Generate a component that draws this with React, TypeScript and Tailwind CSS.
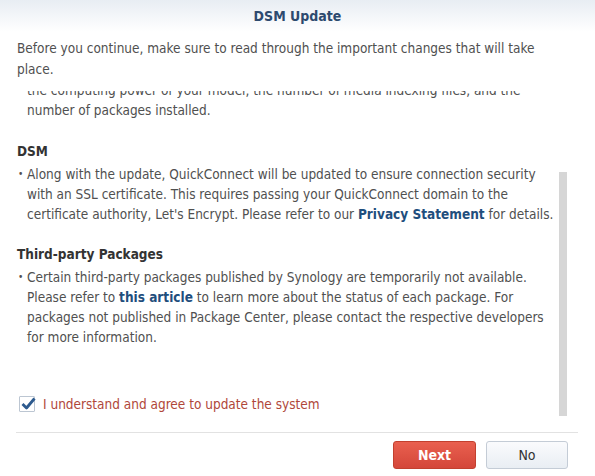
import React from "react"

const FONT = { fontFamily: '"DejaVu Sans Condensed", "DejaVu Sans", Verdana, sans-serif' }

function Bullet({ children }: { children: React.ReactNode }) {
  return (
    <div className="flex">
      <span className="w-[10px] shrink-0 pl-[1px] text-[10px]">•</span>
      <p className="flex-1">{children}</p>
    </div>
  )
}

export default function App() {
  return (
    <div style={FONT} className="w-[595px] h-[476px] bg-white flex flex-col text-[13.5px] text-[#505050] overflow-hidden">
      <header className="h-[32px] shrink-0 flex items-center justify-center bg-gradient-to-b from-[#e8edf3] to-white">
        <h1 className="text-[14px] font-bold text-[#2d4a6e]">DSM Update</h1>
      </header>

      <div className="pl-[17px] pr-[40px] pt-[6px] leading-[21px]">
        Before you continue, make sure to read through the important changes that will take place.
      </div>

      {/* scrolled content, top line cut by the viewport */}
      <div className="relative mt-[11px] h-[331px] shrink-0 overflow-hidden pl-[17px] pr-[40px] leading-[20px]">
        <div className="-mt-[11px]">
          <div className="pl-[10px]">
            the computing power of your model, the number of media indexing files, and the number of packages installed.
          </div>

          <h2 className="mt-[21px] font-bold text-[#333]">DSM</h2>
          <div className="mt-[3px]">
            <Bullet>
              Along with the update, QuickConnect will be updated to ensure connection security with an SSL
              certificate. This requires passing your QuickConnect domain to the certificate authority, Let's
              Encrypt. Please refer to our <span className="font-bold text-[#1f4e7d]">Privacy Statement</span> for
              details.
            </Bullet>
          </div>

          <h2 className="mt-[20px] font-bold text-[#333]">Third-party Packages</h2>
          <div className="mt-[3px]">
            <Bullet>
              Certain third-party packages published by Synology are temporarily not available. Please refer to{" "}
              <span className="font-bold text-[#1f4e7d]">this article</span> to learn more about the status of each
              package. For packages not published in Package Center, please contact the respective developers for
              more information.
            </Bullet>
          </div>

          <label className="mt-[47px] flex items-center gap-[8px] pl-[2px]">
            <span className="relative w-[16px] h-[16px] shrink-0 border border-[#bcc6d2] bg-white rounded-[1px]">
              <svg viewBox="0 0 16 16" className="absolute left-[0px] -top-[2px] w-[16px] h-[16px]">
                <path d="M2.5 9 L6.5 13 L14.5 3.5" fill="none" stroke="#2d5a8e" strokeWidth="2.8" strokeLinejoin="round" />
              </svg>
            </span>
            <span className="text-[#b0473a]">I understand and agree to update the system</span>
          </label>
        </div>

        <div className="absolute right-[28px] top-[81px] w-[8px] h-[244px] bg-[#d6d6d6]" />
      </div>

      <div className="ml-[16px] mr-[17px] mt-[10px] border-t border-[#e2e2e2]" />

      <div className="flex justify-end gap-[10px] pr-[27px] pt-[8px]">
        <button className="w-[83px] h-[28px] rounded-[3px] border border-[#c2402f] bg-gradient-to-b from-[#e9604f] to-[#d4463a] text-white font-bold text-[14px]">
          Next
        </button>
        <button className="w-[82px] h-[28px] rounded-[3px] border border-[#c4ccd6] bg-gradient-to-b from-[#fafbfd] to-[#e9eef3] text-[#333] text-[14px]">
          No
        </button>
      </div>
    </div>
  )
}
